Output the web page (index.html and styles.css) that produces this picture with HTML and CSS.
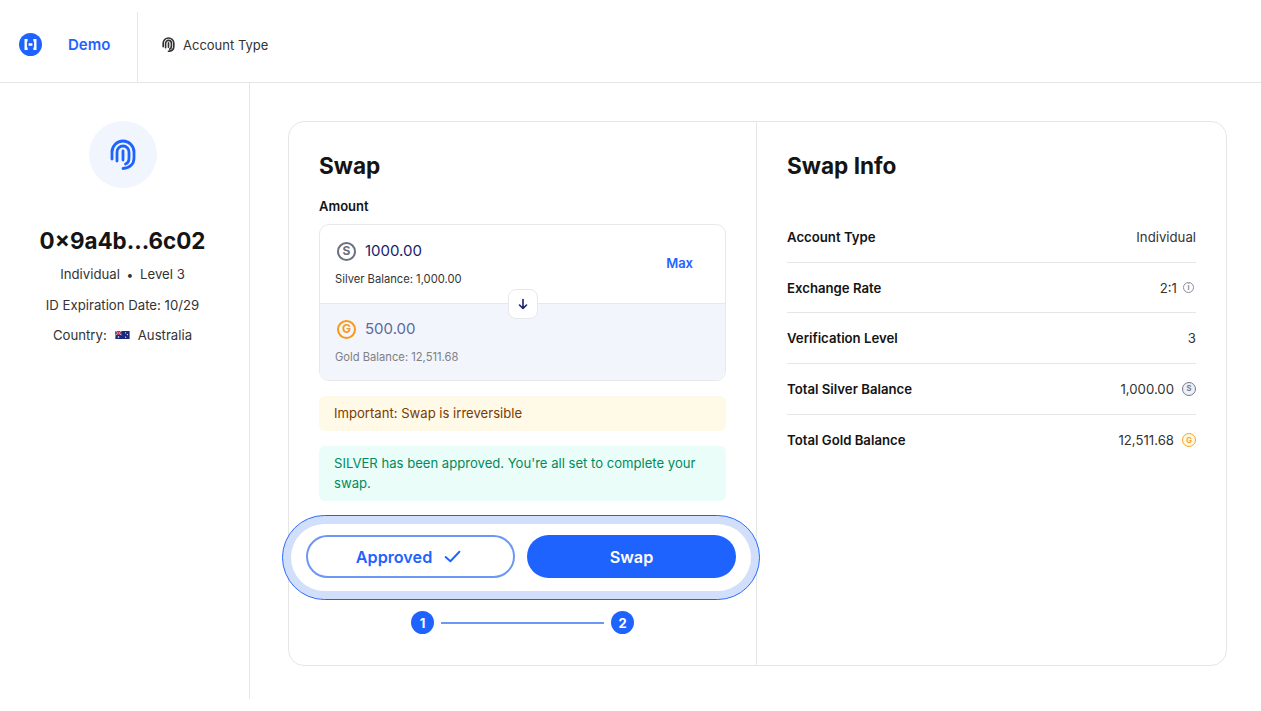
FILE: index.html
```html
<!DOCTYPE html>
<html>
<head>
    <title>Swap</title>
    <link rel="stylesheet" href="styles.css">
</head>
<body>
    <header class="topbar">
        <div class="brand">
            <svg class="brand-logo" viewBox="0 0 24 24">
                <circle cx="12" cy="12" r="12" fill="#1f63ff"/>
                <path d="M9 7.500H7V16.500H9M15 7.500H17V16.500H15M10 12H14" fill="none" stroke="#fff" stroke-width="2.500"/>
            </svg>
            <span class="brand-name">Demo</span>
        </div>
        <div class="nav-item">
            <svg class="nav-icon" viewBox="0 0 26 31" fill="none" stroke="#333" stroke-width="3.400" stroke-linecap="round">
                <path d="M2 20V13A11 11 0 0 1 24 13V19C24 25 20 29 13 29.500"/>
                <path d="M7 22V13A6 6 0 0 1 19 13V19C19 22 18 24 15.500 25"/>
                <path d="M13 12V21"/>
            </svg>
            <span>Account Type</span>
        </div>
    </header>

    <div class="layout">
        <aside class="sidebar">
            <div class="avatar">
                <svg viewBox="0 0 26 31" fill="none" stroke="#1f63ff" stroke-width="2.800" stroke-linecap="round">
                    <path d="M2 20V13A11 11 0 0 1 24 13V19C24 25 20 29 13 29.500"/>
                    <path d="M7 22V13A6 6 0 0 1 19 13V19C19 22 18 24 15.500 25"/>
                    <path d="M13 12V21"/>
                </svg>
            </div>
            <h2 class="address">0×9a4b...6c02</h2>
            <p class="meta">Individual <span class="dot">•</span> Level 3</p>
            <p class="meta">ID Expiration Date: 10/29</p>
            <p class="meta country">Country:
                <svg class="flag" viewBox="0 0 16 9">
                    <rect width="16" height="9" fill="#1c2a7d"/>
                    <rect width="7" height="4.500" fill="#3a3f8f"/>
                    <path d="M0 0L7 4.500M7 0L0 4.500" stroke="#e8e8f2" stroke-width="1"/>
                    <path d="M3.500 0V4.500M0 2.250H7" stroke="#d8344a" stroke-width="1"/>
                    <circle cx="11.500" cy="2" r=".7" fill="#fff"/>
                    <circle cx="13.500" cy="4" r=".7" fill="#fff"/>
                    <circle cx="11.500" cy="7" r=".7" fill="#fff"/>
                    <circle cx="3.500" cy="6.800" r=".9" fill="#fff"/>
                </svg>
                Australia
            </p>
        </aside>

        <main class="content">
            <div class="card">
                <section class="swap-panel">
                    <h1>Swap</h1>
                    <div class="field-label">Amount</div>
                    <div class="amount-box">
                        <div class="amount-row">
                            <div>
                                <div class="amount-value">
                                    <span class="coin coin-silver">S</span>
                                    <span>1000.00</span>
                                </div>
                                <div class="balance">Silver Balance: 1,000.00</div>
                            </div>
                            <span class="max">Max</span>
                        </div>
                        <div class="amount-row amount-row-to">
                            <div>
                                <div class="amount-value">
                                    <span class="coin coin-gold">G</span>
                                    <span>500.00</span>
                                </div>
                                <div class="balance">Gold Balance: 12,511.68</div>
                            </div>
                        </div>
                        <div class="arrow-btn">
                            <svg viewBox="0 0 12 12" fill="none" stroke="#16236b" stroke-width="1.600" stroke-linecap="round" stroke-linejoin="round">
                                <path d="M6 1.500V10.500M2.500 7L6 10.500L9.500 7"/>
                            </svg>
                        </div>
                    </div>
                    <div class="notice notice-warn">Important: Swap is irreversible</div>
                    <div class="notice notice-ok">SILVER has been approved. You're all set to complete your swap.</div>
                    <div class="actions">
                        <button class="btn btn-outline">Approved
                            <svg viewBox="0 0 16 12" fill="none" stroke="#1f63ff" stroke-width="1.800" stroke-linecap="round" stroke-linejoin="round">
                                <path d="M1.500 6.500L6 10.500L14.500 1.500"/>
                            </svg>
                        </button>
                        <button class="btn btn-solid">Swap</button>
                    </div>
                    <div class="steps">
                        <span class="step">1</span>
                        <span class="step-line"></span>
                        <span class="step">2</span>
                    </div>
                </section>
                <section class="info-panel">
                    <h1>Swap Info</h1>
                    <div class="info-list">
                        <div class="info-row"><strong>Account Type</strong><span>Individual</span></div>
                        <div class="info-row"><strong>Exchange Rate</strong><span class="tight">2:1 <i class="mini mini-info">i</i></span></div>
                        <div class="info-row"><strong>Verification Level</strong><span>3</span></div>
                        <div class="info-row"><strong>Total Silver Balance</strong><span>1,000.00 <i class="mini mini-silver">S</i></span></div>
                        <div class="info-row"><strong>Total Gold Balance</strong><span>12,511.68 <i class="mini mini-gold">G</i></span></div>
                    </div>
                </section>
            </div>
        </main>
    </div>
</body>
</html>
```

FILE: styles.css
```css
* {
    box-sizing: border-box;
}
body {
    margin: 0;
    font-family: Inter, "Liberation Sans", sans-serif;
    color: #141414;
    background-color: #fff;
    overflow: hidden;
}
h1, h2, p {
    margin: 0;
}

.topbar {
    display: flex;
    align-items: stretch;
    height: 83px;
    padding-top: 12px;
    border-bottom: 1px solid #e6e6e6;
}
.brand {
    display: flex;
    align-items: center;
    width: 138px;
    padding: 0 0 5px 19px;
    border-right: 1px solid #e6e6e6;
}
.brand-logo {
    width: 23px;
    height: 23px;
}
.brand-name {
    margin-left: 26px;
    color: #1f63ff;
    font-size: 15px;
    font-weight: 600;
}
.nav-item {
    display: flex;
    align-items: center;
    gap: 8px;
    padding: 0 0 5px 24px;
    font-size: 13px;
    color: #333;
}
.nav-icon {
    width: 13px;
    height: 15px;
}

.layout {
    display: flex;
}
.sidebar {
    width: 250px;
    height: 616px;
    padding: 38px 4px 0 0;
    border-right: 1px solid #e6e6e6;
    text-align: center;
}
.avatar {
    display: flex;
    align-items: center;
    justify-content: center;
    width: 68px;
    height: 67px;
    margin: 0 auto;
    border-radius: 50%;
    background-color: #f1f5fd;
}
.avatar svg {
    width: 26px;
    height: 31px;
}
.address {
    margin-top: 39px;
    margin-bottom: 5px;
    font-size: 22.400px;
    font-weight: 700;
    line-height: 27px;
}
.meta {
    height: 30.500px;
    font-size: 13.200px;
    line-height: 30px;
    color: #333;
}
.dot {
    margin: 0 3px;
    font-size: 12px;
}
.country {
    display: flex;
    align-items: center;
    justify-content: center;
    gap: 8px;
}
.flag {
    width: 15px;
    height: 8px;
}

.content {
    flex: 1;
    padding: 38px 34px 0 38px;
}
.card {
    display: flex;
    height: 545px;
    border: 1px solid #e6e6e6;
    border-radius: 16px;
}
.swap-panel {
    width: 468px;
    padding: 29px 30px 0 30px;
    border-right: 1px solid #e6e6e6;
}
.info-panel {
    flex: 1;
    padding: 29px 30px 0 30px;
}
.swap-panel h1, .info-panel h1 {
    font-size: 22.600px;
    font-weight: 700;
    line-height: 30px;
}
.field-label {
    margin-top: 16px;
    margin-bottom: 9px;
    font-size: 13px;
    font-weight: 600;
    line-height: 18px;
}

.amount-box {
    position: relative;
    height: 157px;
    border: 1px solid #e6e8ec;
    border-radius: 10px;
}
.amount-row {
    display: flex;
    align-items: center;
    justify-content: space-between;
    height: 78px;
    padding: 0 32px 0 15px;
    color: #16236b;
}
.amount-row-to {
    height: 77px;
    border-top: 1px solid #e6e8ec;
    border-radius: 0 0 10px 10px;
    background-color: #f2f5fc;
    color: #5c6a9c;
}
.amount-value {
    display: flex;
    align-items: center;
    gap: 9px;
    padding-left: 2px;
    font-size: 15px;
    line-height: 20px;
}
.coin {
    display: flex;
    align-items: center;
    justify-content: center;
    width: 19px;
    height: 19px;
    border-radius: 50%;
    border: 2px solid;
    font-size: 12px;
    font-weight: 700;
}
.coin-silver {
    border-color: #6b7080;
    color: #6b7080;
}
.coin-gold {
    border-color: #f59a1b;
    color: #f59a1b;
}
.balance {
    margin-top: 10px;
    font-size: 11.200px;
    line-height: 16px;
    color: #333;
}
.amount-row-to .balance {
    color: #808080;
}
.max {
    margin-bottom: 2px;
    color: #1f63ff;
    font-size: 13px;
    font-weight: 600;
}
.arrow-btn {
    position: absolute;
    left: 188px;
    top: 64px;
    display: flex;
    align-items: center;
    justify-content: center;
    width: 30px;
    height: 30px;
    border: 1px solid #e6e8ec;
    border-radius: 8px;
    background-color: #fff;
}
.arrow-btn svg {
    width: 12px;
    height: 12px;
}

.notice {
    margin-top: 15px;
    padding: 7px 15px 8px;
    border-radius: 6px;
    font-size: 13.100px;
    line-height: 20px;
}
.notice-warn {
    background-color: #fff9e8;
    color: #7a3b00;
}
.notice-ok {
    background-color: #ebfdf8;
    color: #008a5e;
}

.actions {
    display: flex;
    gap: 12px;
    width: 478px;
    height: 85px;
    margin: 14px 0 0 -37px;
    padding: 19px 23px;
    border: 1px solid #1f63ff;
    border-radius: 43px;
    background-color: #fff;
    box-shadow: inset 0 0 0 8px #d2dffb;
}
.btn {
    flex: none;
    display: flex;
    align-items: center;
    justify-content: center;
    width: 209px;
    height: 43px;
    border-radius: 22px;
    font-family: inherit;
    font-size: 16.200px;
    font-weight: 600;
}
.btn-outline {
    gap: 12px;
    padding: 0 4px 0 0;
    border: 2px solid #6d97f7;
    background-color: #fff;
    color: #1f63ff;
}
.btn-outline svg {
    width: 17px;
    height: 13px;
}
.btn-solid {
    border: none;
    background-color: #1f63ff;
    color: #fff;
}

.steps {
    display: flex;
    align-items: center;
    justify-content: center;
    gap: 7px;
    margin-top: 11px;
}
.step {
    display: flex;
    align-items: center;
    justify-content: center;
    width: 23px;
    height: 23px;
    border-radius: 50%;
    background-color: #1f63ff;
    color: #fff;
    font-size: 13px;
    font-weight: 700;
}
.step-line {
    width: 163px;
    height: 2px;
    background-color: #6d97f7;
}

.info-list {
    margin-top: 31px;
}
.info-row {
    display: flex;
    align-items: center;
    justify-content: space-between;
    height: 50.700px;
    border-bottom: 1px solid #e6e6e6;
    font-size: 13.200px;
    color: #333;
}
.info-row:last-child {
    border-bottom: none;
}
.info-row strong {
    font-weight: 600;
    color: #141414;
}
.info-row span {
    display: flex;
    align-items: center;
    gap: 8px;
}
.info-row .tight {
    gap: 6px;
    padding-right: 2px;
}
.mini {
    display: flex;
    align-items: center;
    justify-content: center;
    width: 14px;
    height: 14px;
    border-radius: 50%;
    border: 1.500px solid;
    font-size: 7.500px;
    font-style: normal;
    font-weight: 700;
}
.mini-info {
    width: 11px;
    height: 11px;
    border-width: 1px;
    color: #8a8f99;
}
.mini-silver {
    color: #737a90;
    background-color: #eef0f6;
}
.mini-gold {
    color: #f5a623;
    background-color: #fef6e4;
}
```
